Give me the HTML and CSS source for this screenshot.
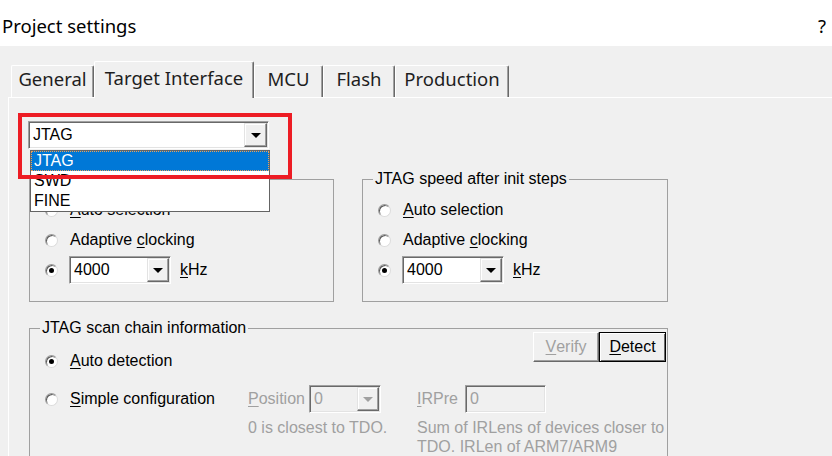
FILE: index.html
```html
<!DOCTYPE html>
<html>
<head>
<meta charset="utf-8">
<title>Project settings</title>
<link rel="stylesheet" href="styles.css">
</head>
<body>
<div class="titlebar"><span class="title">Project settings</span><span class="help">?</span></div>
<div class="tabs">
  <div class="tab t-general">General</div>
  <div class="tab t-target active">Target Interface</div>
  <div class="tab t-mcu">MCU</div>
  <div class="tab t-flash">Flash</div>
  <div class="tab t-prod">Production</div>
</div>
<div class="panel">
  <div class="iface">
    <div class="combo big"><span class="val">JTAG</span><span class="drop"><i class="arrow"></i></span></div>
    <ul class="list">
      <li class="sel">JTAG</li>
      <li>SWD</li>
      <li>FINE</li>
    </ul>
    <div class="mark"></div>
  </div>
  <div class="groups">
    <fieldset class="group g1">
      <legend class="covered">JTAG speed before init steps</legend>
      <div class="rows">
        <label class="radio"><span class="rb"></span><span><u>A</u>uto selection</span></label>
        <label class="radio"><span class="rb"></span><span>Adaptive <u>c</u>locking</span></label>
        <div class="speed"><span class="rb on"></span><div class="combo small"><span class="val">4000</span><span class="drop"><i class="arrow"></i></span></div><span class="unit"><u>k</u>Hz</span></div>
      </div>
    </fieldset>
    <fieldset class="group g2">
      <legend>JTAG speed after init steps</legend>
      <div class="rows">
        <label class="radio"><span class="rb"></span><span><u>A</u>uto selection</span></label>
        <label class="radio"><span class="rb"></span><span>Adaptive <u>c</u>locking</span></label>
        <div class="speed"><span class="rb on"></span><div class="combo small"><span class="val">4000</span><span class="drop"><i class="arrow"></i></span></div><span class="unit"><u>k</u>Hz</span></div>
      </div>
    </fieldset>
  </div>
  <fieldset class="group g3">
    <legend>JTAG scan chain information</legend>
    <div class="row1">
      <label class="radio auto"><span class="rb on"></span><span><u>A</u>uto detection</span></label>
      <div class="btns">
        <span class="btn disabled"><u>V</u>erify</span>
        <span class="btn default"><u>D</u>etect</span>
      </div>
    </div>
    <div class="chain">
      <label class="radio simple"><span class="rb"></span><span><u>S</u>imple configuration</span></label>
      <div class="field"><span class="dis"><u>P</u>osition</span><div class="combo pos disabled"><span class="val">0</span><span class="drop"><i class="arrow"></i></span></div></div>
      <div class="field"><span class="dis"><u>I</u>RPre</span><div class="edit disabled">0</div></div>
      <div class="note"></div>
      <div class="note dis">0 is closest to TDO.</div>
      <div class="note dis">Sum of IRLens of devices closer to<br>TDO. IRLen of ARM7/ARM9</div>
    </div>
  </fieldset>
</div>
</body>
</html>
```
FILE: styles.css
```css
html, body {
  margin: 0;
  padding: 0;
  width: 832px;
  height: 456px;
  overflow: hidden;
}
body {
  background: #f0f0f0;
  font-family: "Liberation Sans", Arial, sans-serif;
  font-size: 16px;
  color: #000;
}
u { text-decoration: underline; text-underline-offset: 2px; }

.titlebar {
  height: 41px;
  padding: 5px 6px 0 2px;
  background: #fff;
  display: flex;
  justify-content: space-between;
  font-family: "Noto Sans", sans-serif;
  font-size: 18.5px;
  line-height: 41px;
  color: #000;
}

.tabs {
  height: 51px;
  display: flex;
  align-items: flex-end;
  padding-left: 11px;
  font-family: "Noto Sans", sans-serif;
  font-size: 18.5px;
  color: #1e1e1e;
}
.tab {
  box-sizing: border-box;
  height: 32px;
  line-height: 26px;
  text-align: center;
  border-top: 1px solid #fff;
  border-left: 1px solid #fff;
  border-right: 1px solid #696969;
  box-shadow: inset -1px 0 0 #a0a0a0;
  border-radius: 2px 2px 0 0;
  background: #f0f0f0;
}
.tab.active {
  height: 37px;
  line-height: 32px;
  margin-bottom: -1px;
  position: relative;
  z-index: 1;
}
.t-general { width: 83px; }
.t-target { width: 160px; }
.t-mcu { width: 69px; }
.t-flash { width: 72px; }
.t-prod { width: 114px; }

.panel {
  margin-left: 8px;
  border-top: 1px solid #fff;
  border-left: 1px solid #fff;
  height: 335px;
  padding: 23px 0 0 19px;
}

.iface {
  position: relative;
  width: 241px;
}

.combo {
  display: flex;
  box-sizing: border-box;
  height: 28px;
  background: #fff;
  border: 1px solid;
  border-color: #a0a0a0 #fff #fff #a0a0a0;
  box-shadow: inset 1px 1px 0 #696969, inset -1px -1px 0 #e3e3e3;
  padding: 1px;
}
.combo .val {
  flex: 1;
  line-height: 24px;
  padding-left: 3px;
}
.combo .drop {
  box-sizing: border-box;
  width: 22px;
  height: 24px;
  border: 1px solid;
  border-color: #e3e3e3 #696969 #696969 #e3e3e3;
  box-shadow: inset -1px -1px 0 #a0a0a0, inset 1px 1px 0 #fff;
  background: #f0f0f0;
  display: flex;
  align-items: center;
  justify-content: center;
}
.combo.big .drop { width: 23px; }
.arrow {
  width: 0;
  height: 0;
  border-left: 5px solid transparent;
  border-right: 5px solid transparent;
  border-top: 5px solid #000;
  margin-top: 1px;
}
.combo.disabled { background: #f0f0f0; }
.combo.disabled .val { color: #a0a0a0; }
.combo.disabled .arrow { border-top-color: #a0a0a0; }

.list {
  position: absolute;
  left: 2px;
  top: 29px;
  width: 240px;
  box-sizing: border-box;
  margin: 0;
  padding: 0;
  list-style: none;
  background: #fff;
  border: 1px solid #646464;
  z-index: 2;
}
.list li {
  height: 20px;
  line-height: 20px;
  padding-left: 3px;
}
.list li.sel {
  background: #0078d7;
  color: #fff;
  outline: 1px dotted #e9a25a;
  outline-offset: -1px;
}
.mark {
  position: absolute;
  left: -10px;
  top: -8px;
  width: 274px;
  height: 66px;
  box-sizing: border-box;
  border: 4px solid #ed1c24;
  z-index: 3;
  pointer-events: none;
}

.groups {
  display: flex;
  gap: 28px;
  margin: 21px 0 0 1px;
}
.group {
  box-sizing: border-box;
  margin: 0;
  min-width: 0;
  border: 1px solid #a0a0a0;
  padding: 7px 15px 17px;
}
.group legend {
  padding: 0 2px;
  margin-left: -5px;
  line-height: 18px;
  font-size: 16px;
}
.group legend.covered { visibility: hidden; }
.g1 { width: 305px; }
.g2 { width: 306px; }

.rows {
  display: flex;
  flex-direction: column;
}
.radio {
  display: flex;
  align-items: center;
  height: 30px;
}
.rb {
  flex: none;
  position: relative;
  box-sizing: border-box;
  width: 13px;
  height: 13px;
  border-radius: 50%;
  background: #fff;
  border: 1px solid;
  border-color: #9a9a9a #dcdcdc #dcdcdc #9a9a9a;
  box-shadow: inset 1px 1px 0 #5a5a5a;
  margin-right: 12px;
}
.rb.on::after {
  content: "";
  position: absolute;
  left: 3px;
  top: 3px;
  width: 5px;
  height: 5px;
  border-radius: 50%;
  background: #000;
}
.speed {
  display: flex;
  align-items: center;
  margin-top: 1px;
  height: 28px;
}
.combo.small {
  width: 102px;
  margin-left: -1px;
}
.unit { margin-left: 9px; }

.g3 {
  width: 639px;
  margin: 17px 0 0 1px;
  padding: 0 1px 0 15px;
  height: 140px;
}
.row1 {
  display: flex;
  height: 39px;
  margin-top: -5px;
}
.radio.auto {
  height: 20px;
  align-self: flex-end;
}
.btns {
  margin-left: auto;
  display: flex;
  align-self: flex-start;
}
.btn {
  box-sizing: border-box;
  height: 30px;
  display: flex;
  align-items: center;
  justify-content: center;
  background: #f0f0f0;
  border: 1px solid;
  border-color: #fff #696969 #696969 #fff;
  box-shadow: inset -1px -1px 0 #a0a0a0;
}
.btn.disabled {
  width: 66px;
  color: #a0a0a0;
}
.btn.default {
  width: 67px;
  border: 1px solid #000;
  box-shadow: inset 1px 1px 0 #fff, inset -1px -1px 0 #696969;
}

.chain {
  display: grid;
  grid-template-columns: 203px 169px 1fr;
  grid-template-rows: 28px auto;
  row-gap: 5px;
  margin-top: 14px;
}
.radio.simple { height: 28px; }
.field {
  display: flex;
  align-items: center;
}
.dis { color: #a0a0a0; }
.combo.pos {
  width: 72px;
  margin-left: 4px;
}
.edit {
  box-sizing: border-box;
  width: 81px;
  height: 28px;
  margin-left: 7px;
  border: 1px solid;
  border-color: #a0a0a0 #fff #fff #a0a0a0;
  box-shadow: inset 1px 1px 0 #696969, inset -1px -1px 0 #e3e3e3;
  padding: 1px 1px 1px 4px;
  line-height: 24px;
}
.edit.disabled {
  background: #f0f0f0;
  color: #a0a0a0;
}
.note {
  line-height: 19px;
  white-space: nowrap;
}
```
